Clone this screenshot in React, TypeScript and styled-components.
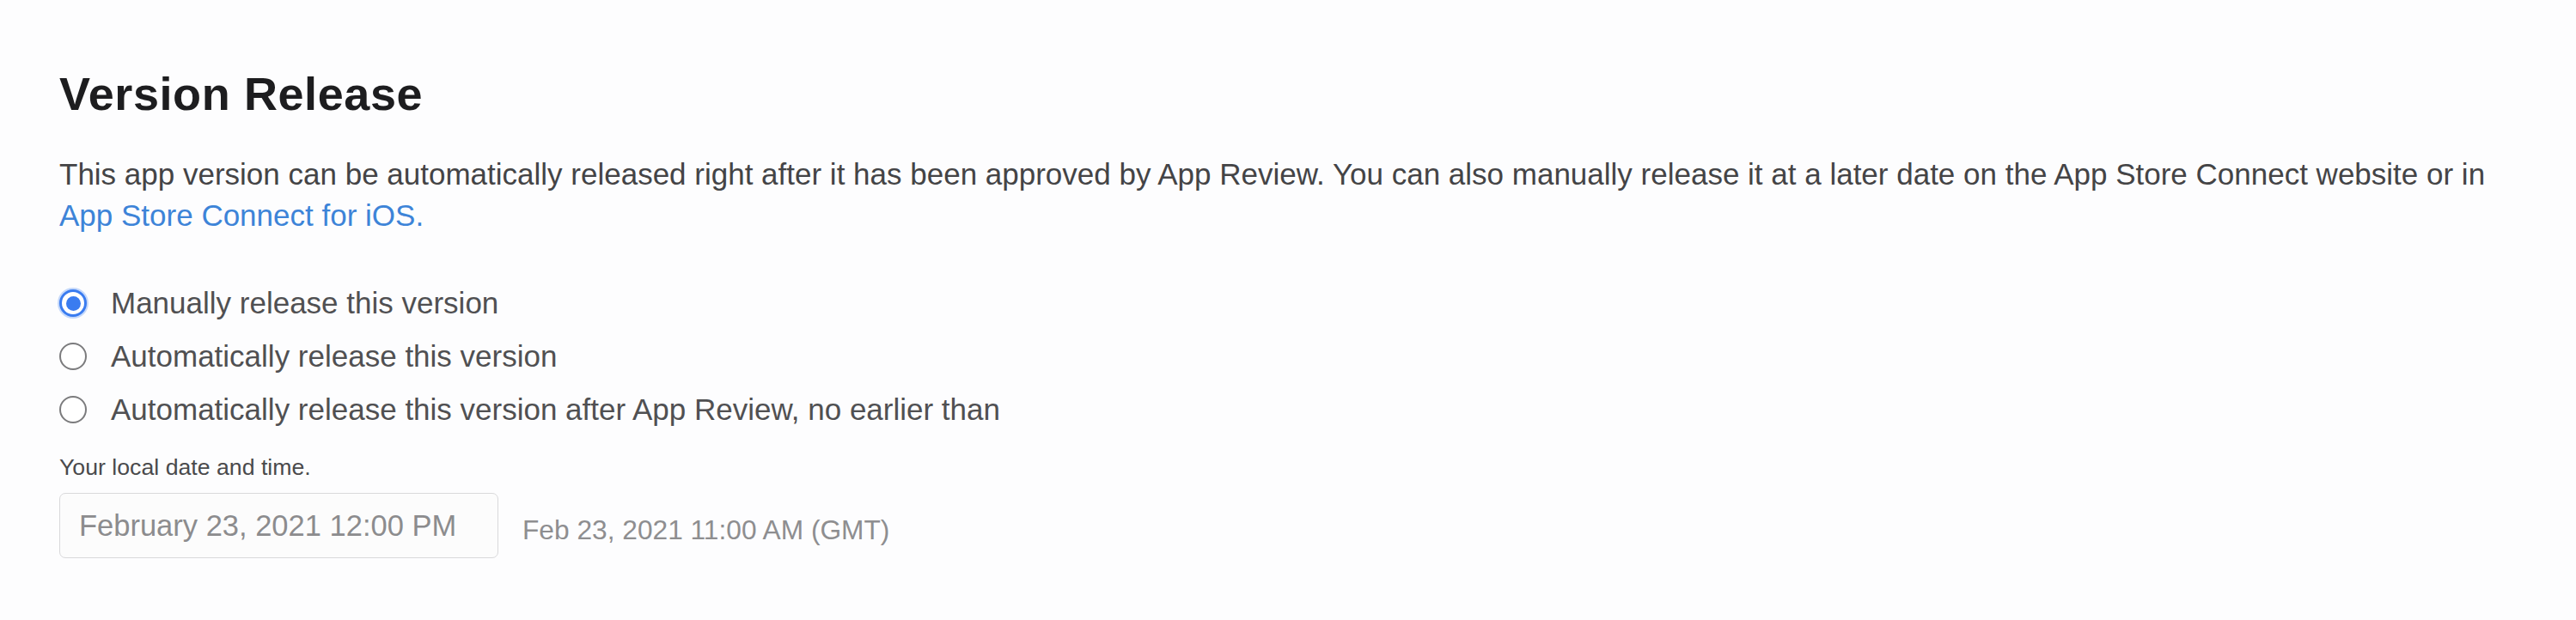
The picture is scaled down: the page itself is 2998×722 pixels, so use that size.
import React, { useState } from "react";
import styled, { createGlobalStyle } from "styled-components";

const GlobalStyle = createGlobalStyle`
  html, body {
    margin: 0;
    padding: 0;
    background: #fdfdfe;
  }
  body {
    font-family: "Liberation Sans", Arial, sans-serif;
    -webkit-font-smoothing: antialiased;
  }
`;

const Page = styled.main`
  min-height: 722px;
  box-sizing: border-box;
  padding: 77px 40px 0 69px;
  background: #fdfdfe;
`;

const Title = styled.h2`
  margin: 0;
  font-size: 54px;
  line-height: 64px;
  font-weight: 700;
  color: #1d1d1f;
  letter-spacing: 0.6px;
`;

const Intro = styled.p`
  margin: 38px 0 0;
  font-size: 35px;
  line-height: 48px;
  color: #444446;
`;

const Link = styled.a`
  color: #3d84d8;
  text-decoration: none;
`;

const Options = styled.div`
  display: flex;
  flex-direction: column;
  margin-top: 47px;
`;

const Option = styled.label`
  display: flex;
  align-items: center;
  height: 62px;
  gap: 28px;
  cursor: pointer;
`;

const Radio = styled.input.attrs({ type: "radio" })`
  appearance: none;
  margin: 0;
  box-sizing: border-box;
  width: 32px;
  height: 32px;
  border-radius: 50%;
  border: 2.5px solid #7b7b7d;
  background: #fff;
  display: grid;
  place-items: center;
  flex-shrink: 0;

  &:checked {
    border: 3px solid #3a7cf0;
    box-shadow: 0 0 0 2px rgba(58, 124, 240, 0.28);
  }
  &:checked::after {
    content: "";
    width: 17px;
    height: 17px;
    border-radius: 50%;
    background: #3a7cf0;
  }
`;

const OptionText = styled.span`
  font-size: 35px;
  line-height: 40px;
  color: #505052;
`;

const Hint = styled.div`
  margin-top: 20px;
  font-size: 26.7px;
  line-height: 32px;
  color: #4a4a4c;
`;

const DateRow = styled.div`
  display: flex;
  align-items: center;
  gap: 28px;
  margin-top: 14px;
`;

const DateField = styled.div`
  box-sizing: border-box;
  width: 511px;
  height: 76px;
  padding: 0 22px;
  display: flex;
  align-items: center;
  border: 1.5px solid #d9d9db;
  border-radius: 7px;
  background: #fcfcfc;
  font-size: 34.5px;
  color: #8c8c8e;
  white-space: nowrap;
`;

const Converted = styled.span`
  font-size: 31.7px;
  color: #8e8e90;
  padding-top: 10px;
  white-space: nowrap;
`;

const choices = [
  "Manually release this version",
  "Automatically release this version",
  "Automatically release this version after App Review, no earlier than",
];

export default function App() {
  const [selected, setSelected] = useState(0);

  return (
    <>
      <GlobalStyle />
      <Page>
        <Title>Version Release</Title>
        <Intro>
          This app version can be automatically released right after it has been approved by App
          Review. You can also manually release it at a later date on the App Store Connect website
          or in
          <br />
          <Link href="#">App Store Connect for iOS.</Link>
        </Intro>
        <Options>
          {choices.map((c, i) => (
            <Option key={c}>
              <Radio name="release" checked={selected === i} onChange={() => setSelected(i)} />
              <OptionText>{c}</OptionText>
            </Option>
          ))}
        </Options>
        <Hint>Your local date and time.</Hint>
        <DateRow>
          <DateField role="textbox">February 23, 2021 12:00 PM</DateField>
          <Converted>Feb 23, 2021 11:00 AM (GMT)</Converted>
        </DateRow>
      </Page>
    </>
  );
}
